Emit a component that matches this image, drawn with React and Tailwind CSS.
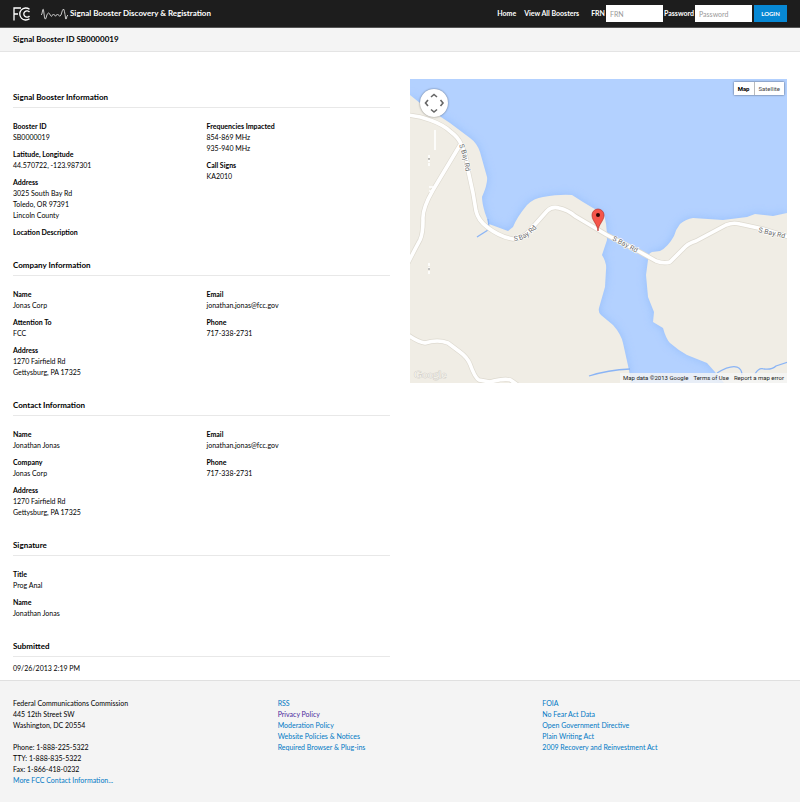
import React from 'react';

const LAND_WEST =
  'M0 16 L10 24 L40 44 L60 59 Q67 64 70 73 L77 98 Q78 104 72 118 Q72 124 75 134 L79 145 L98 152 L103 148 Q107 138 117 126 Q124 119 133 118 Q150 115 162 116 L173 123 L183 129 L193 134 Q197 142 197 161 L192 176 Q197 184 196 191 L195 208 L189 229 Q188 233 191 236 L203 246 Q211 255 213 264 L219 291 L221 304 L0 304 Z';
const LAND_EAST =
  'M377 134 L363 137 L345 135 L337 138 L313 141 L283 139 Q276 140 270 145 Q266 150 264 157 Q258 168 250 172 L242 173 Q238 174 238 181 L236 196 L238 218 L244 233 L243 243 L253 249 Q256 260 260 264 Q268 271 277 276 L297 284 L305 293 L314 304 L377 304 Z';
const ROADS = [
  'M-2 36 Q10 37 20 41 Q34 46 41 53 Q48 58 51 65 Q57 78 58 91 L63 114 L66 132 Q68 141 77 148 Q90 158 103 160 Q113 160 121 150 L137 132 Q142 127 149 129 Q158 131 165 137 L197 156 L230 173 L246 182 Q254 185 260 183 L272 171 Q278 164 286 162 L316 146 Q323 143 330 145 L353 150 L379 158',
  'M50 66 L23 111 Q12 130 13 141 Q13 155 10 161 Q4 172 -2 184',
  'M-2 256 Q8 263 15 264 Q28 260 38 264 L50 273 Q57 278 60 285 Q65 299 69 301 L80 303 Q98 298 102 302 L109 307',
];
const STREAMS = [
  'M67 158 L78 151',
  'M179 297 Q198 291 220 290',
  'M307 294 Q320 286 327 288 Q332 290 332 296',
  'M345 295 Q349 288 354 290 Q362 291 366 287 L378 283',
];

function StreetMap() {
  return (
    <svg viewBox="0 0 377 304" preserveAspectRatio="xMidYMid slice" className="block h-full w-full" role="img" aria-label="Map of booster location">
      <defs>
        <filter id="shore" x="-10%" y="-10%" width="120%" height="120%">
          <feGaussianBlur stdDeviation="5" />
        </filter>
        <path id="label-north" d="M49 66 Q54 79 56 95" />
        <path id="label-west" d="M104 162 Q117 162 130 145" />
        <path id="label-bridge" d="M202 161 L234 178" />
        <path id="label-east" d="M348 153 L385 162" />
      </defs>
      <rect width="377" height="304" fill="#b3d1ff" />
      <g fill="#8db9fb" opacity="0.75" filter="url(#shore)">
        <path d={LAND_WEST} />
        <path d={LAND_EAST} />
      </g>
      <g fill="#f0ede5">
        <path d={LAND_WEST} />
        <path d={LAND_EAST} />
      </g>
      <g fill="none" stroke="#8ab4f5" strokeWidth="1.3">
        {STREAMS.map((d) => <path key={d} d={d} />)}
        <path d="M78 140 L79 148" />
      </g>
      <g fill="none" stroke="#dedad0" strokeWidth="5" strokeLinejoin="round">
        {ROADS.map((d) => <path key={d} d={d} />)}
      </g>
      <g fill="none" stroke="#ffffff" strokeWidth="3.6" strokeLinejoin="round">
        {ROADS.map((d) => <path key={d} d={d} />)}
      </g>
      <g fill="none" stroke="#ffffff" strokeWidth="1.6">
        <path d="M25 51 V71" />
        <path d="M19 76 V87" strokeDasharray="3 1" />
        <path d="M19 184 V195" strokeDasharray="3 1" />
        <path d="M19 108 H23 M19 112 H22" />
      </g>
      <circle cx="19" cy="80" r="0.8" fill="#777777" />
      <circle cx="19" cy="190" r="0.8" fill="#777777" />
      <g fill="#6b6b6b" stroke="#ffffff" strokeWidth="1.2" paintOrder="stroke" className="font-['Roboto',sans-serif] text-[7px]">
        <text><textPath href="#label-north">S Bay Rd</textPath></text>
        <text><textPath href="#label-west">S Bay Rd</textPath></text>
        <text><textPath href="#label-bridge">S Bay Rd</textPath></text>
        <text><textPath href="#label-east">S Bay Rd</textPath></text>
      </g>
      <text x="4" y="299" fill="#f8f6f1" stroke="#c4c1ba" strokeWidth="0.7" paintOrder="stroke" className="font-['Liberation_Serif',serif] text-[11px]">Google</text>
      <path d="M188 152 C187.500 145 182 142 182 136 A6 6 0 0 1 194 136 C194 142 188.500 145 188 152 Z" fill="#f5554a" stroke="#b5322a" strokeWidth="0.7" />
      <circle cx="188" cy="136" r="2" fill="#2e0503" />
    </svg>
  );
}

function PanControl() {
  return (
    <button type="button" aria-label="Pan map" className="absolute top-[10px] left-[10px] h-7 w-7 rounded-full bg-white shadow-[0_0_2px_rgba(0,0,0,0.5)]">
      <svg viewBox="0 0 28 28" className="h-7 w-7" fill="none" stroke="#666666" strokeWidth="1.6">
        <path d="M11 8 L14 5.500 L17 8 M11 20.500 L14 23 L17 20.500 M8 11 L5.500 14 L8 17 M20.500 11 L23 14 L20.500 17" />
      </svg>
    </button>
  );
}

function Field({ label, lines = [] }) {
  return (
    <div>
      <dt className="font-bold">{label}</dt>
      {lines.map((line) => <dd key={line}>{line}</dd>)}
    </div>
  );
}

function Section({ title, columns }) {
  return (
    <section className="mb-[21px]">
      <h2 className="border-b border-[#e8e8e8] pb-1 text-[8px] leading-[12px] font-bold">{title}</h2>
      <div className="mt-[13px] grid grid-cols-2 gap-[10px]">
        {columns.map((fields, i) => (
          <dl key={i} className="flex flex-col gap-1.5">
            {fields.map((f) => <Field key={f.label} {...f} />)}
          </dl>
        ))}
      </div>
    </section>
  );
}

const SECTIONS = [
  {
    title: 'Signal Booster Information',
    columns: [
      [
        { label: 'Booster ID', lines: ['SB0000019'] },
        { label: 'Latitude, Longitude', lines: ['44.570722, -123.987301'] },
        { label: 'Address', lines: ['3025 South Bay Rd', 'Toledo, OR 97391', 'Lincoln County'] },
        { label: 'Location Description' },
      ],
      [
        { label: 'Frequencies Impacted', lines: ['854-869 MHz', '935-940 MHz'] },
        { label: 'Call Signs', lines: ['KA2010'] },
      ],
    ],
  },
  {
    title: 'Company Information',
    columns: [
      [
        { label: 'Name', lines: ['Jonas Corp'] },
        { label: 'Attention To', lines: ['FCC'] },
        { label: 'Address', lines: ['1270 Fairfield Rd', 'Gettysburg, PA 17325'] },
      ],
      [
        { label: 'Email', lines: ['jonathan.jonas@fcc.gov'] },
        { label: 'Phone', lines: ['717-338-2731'] },
      ],
    ],
  },
  {
    title: 'Contact Information',
    columns: [
      [
        { label: 'Name', lines: ['Jonathan Jonas'] },
        { label: 'Company', lines: ['Jonas Corp'] },
        { label: 'Address', lines: ['1270 Fairfield Rd', 'Gettysburg, PA 17325'] },
      ],
      [
        { label: 'Email', lines: ['jonathan.jonas@fcc.gov'] },
        { label: 'Phone', lines: ['717-338-2731'] },
      ],
    ],
  },
  {
    title: 'Signature',
    columns: [
      [
        { label: 'Title', lines: ['Prog Anal'] },
        { label: 'Name', lines: ['Jonathan Jonas'] },
      ],
    ],
  },
];

const POLICY_LINKS = ['RSS', 'Privacy Policy', 'Moderation Policy', 'Website Policies & Notices', 'Required Browser & Plug-ins'];
const ACT_LINKS = ['FOIA', 'No Fear Act Data', 'Open Government Directive', 'Plain Writing Act', '2009 Recovery and Reinvestment Act'];

function LinkList({ links }) {
  return (
    <ul>
      {links.map((l) => (
        <li key={l}>
          <a href="#" className={l === 'Privacy Policy' ? 'text-[#4a2a9c]' : 'text-[#0078c4]'}>{l}</a>
        </li>
      ))}
    </ul>
  );
}

export default function App() {
  return (
    <div className="min-h-screen bg-white font-['Lato','Open_Sans',sans-serif] text-[7px] leading-[11px] text-black">
      <header className="flex h-7 items-center justify-between border-b border-[#555555] bg-[#1d1d1d] px-[13px] font-bold text-white">
        <a href="#" className="flex items-center">
          <svg viewBox="0 0 18 14" className="h-[14px] w-[18px]" fill="none" stroke="#ffffff" strokeWidth="1.3" aria-label="FCC">
            <path d="M1 13.500 V1 H8 M1 7 H5" />
            <path d="M16.500 2.300 A6 6 0 1 0 16.500 11.700" />
            <path d="M16.500 5 A3.200 3.200 0 1 0 16.500 9" />
          </svg>
          <svg viewBox="0 0 28 14" className="ml-[10px] h-[14px] w-7" fill="none" stroke="#dddddd" strokeWidth="0.9" aria-hidden="true">
            <path d="M0 8 Q1 8 1.500 4 Q2.200 0 2.800 5 Q3.800 15 5 11 Q6 6 7.500 6 Q8.500 6 9.500 8.500 Q10.500 10.500 11.500 8 Q12.500 6 13.500 8 Q14.500 10.500 15.500 8 Q16.500 6 17.500 8 Q18.500 10.500 20 8 Q21.500 2 22.500 2 Q23.500 3 24.500 11 Q25 14 26 9 L27 8" />
          </svg>
          <span className="ml-px text-[8px]">Signal Booster Discovery &amp; Registration</span>
        </a>
        <div className="flex items-center">
          <nav className="mr-3 flex gap-2">
            <a href="#">Home</a>
            <a href="#">View All Boosters</a>
          </nav>
          <form className="flex items-center gap-px" onSubmit={(e) => e.preventDefault()}>
            <label htmlFor="frn">FRN</label>
            <input id="frn" placeholder="FRN" className="h-[17px] w-[57px] bg-white px-1 font-normal text-black placeholder:text-[#999999]" />
            <label htmlFor="password">Password</label>
            <input id="password" type="password" placeholder="Password" className="h-[17px] w-[57px] bg-white px-1 font-normal text-black placeholder:text-[#999999]" />
            <button type="submit" className="ml-px h-[17px] w-[33px] bg-[#0788d4] text-[6px] font-bold">LOGIN</button>
          </form>
        </div>
      </header>
      <div className="flex h-6 items-center border-b border-[#e4e4e4] bg-[#f4f4f4] px-[13px]">
        <h1 className="text-[8px] font-bold">Signal Booster ID SB0000019</h1>
      </div>

      <main className="grid grid-cols-2 gap-5 px-[13px] pt-[27px] pb-[6px]">
        <div className="pt-3">
          {SECTIONS.map((s) => <Section key={s.title} {...s} />)}
          <section>
            <h2 className="border-b border-[#e8e8e8] pb-1 text-[8px] leading-[12px] font-bold">Submitted</h2>
            <p className="mt-1.5">09/26/2013 2:19 PM</p>
          </section>
        </div>
        <div className="relative h-[304px] overflow-hidden font-['Roboto',sans-serif]">
          <StreetMap />
          <PanControl />
          <div className="absolute top-[3px] right-[3px] flex h-[13px] bg-white text-[6px] leading-[13px] shadow-[0_0_2px_rgba(0,0,0,0.6)]">
            <button type="button" className="border-r border-[#bbbbbb] px-1 font-bold text-black">Map</button>
            <button type="button" className="px-1 text-[#444444]">Satellite</button>
          </div>
          <div className="absolute right-0 bottom-0 flex h-[10px] gap-[5px] bg-[#f5f5f5]/80 px-[3px] text-[6px] leading-[10px] text-[#222222]">
            <span>Map data ©2013 Google</span>
            <a href="#">Terms of Use</a>
            <a href="#">Report a map error</a>
          </div>
        </div>
      </main>

      <footer className="grid grid-cols-3 gap-5 border-t border-[#e0e0e0] bg-[#f4f4f4] px-[13px] pt-[17px] pb-4">
        <address className="not-italic">
          <p>Federal Communications Commission</p>
          <p>445 12th Street SW</p>
          <p className="mb-[11px]">Washington, DC 20554</p>
          <p>Phone: 1-888-225-5322</p>
          <p>TTY: 1-888-835-5322</p>
          <p>Fax: 1-866-418-0232</p>
          <a href="#" className="text-[#0078c4]">More FCC Contact Information...</a>
        </address>
        <LinkList links={POLICY_LINKS} />
        <LinkList links={ACT_LINKS} />
      </footer>
    </div>
  );
}
